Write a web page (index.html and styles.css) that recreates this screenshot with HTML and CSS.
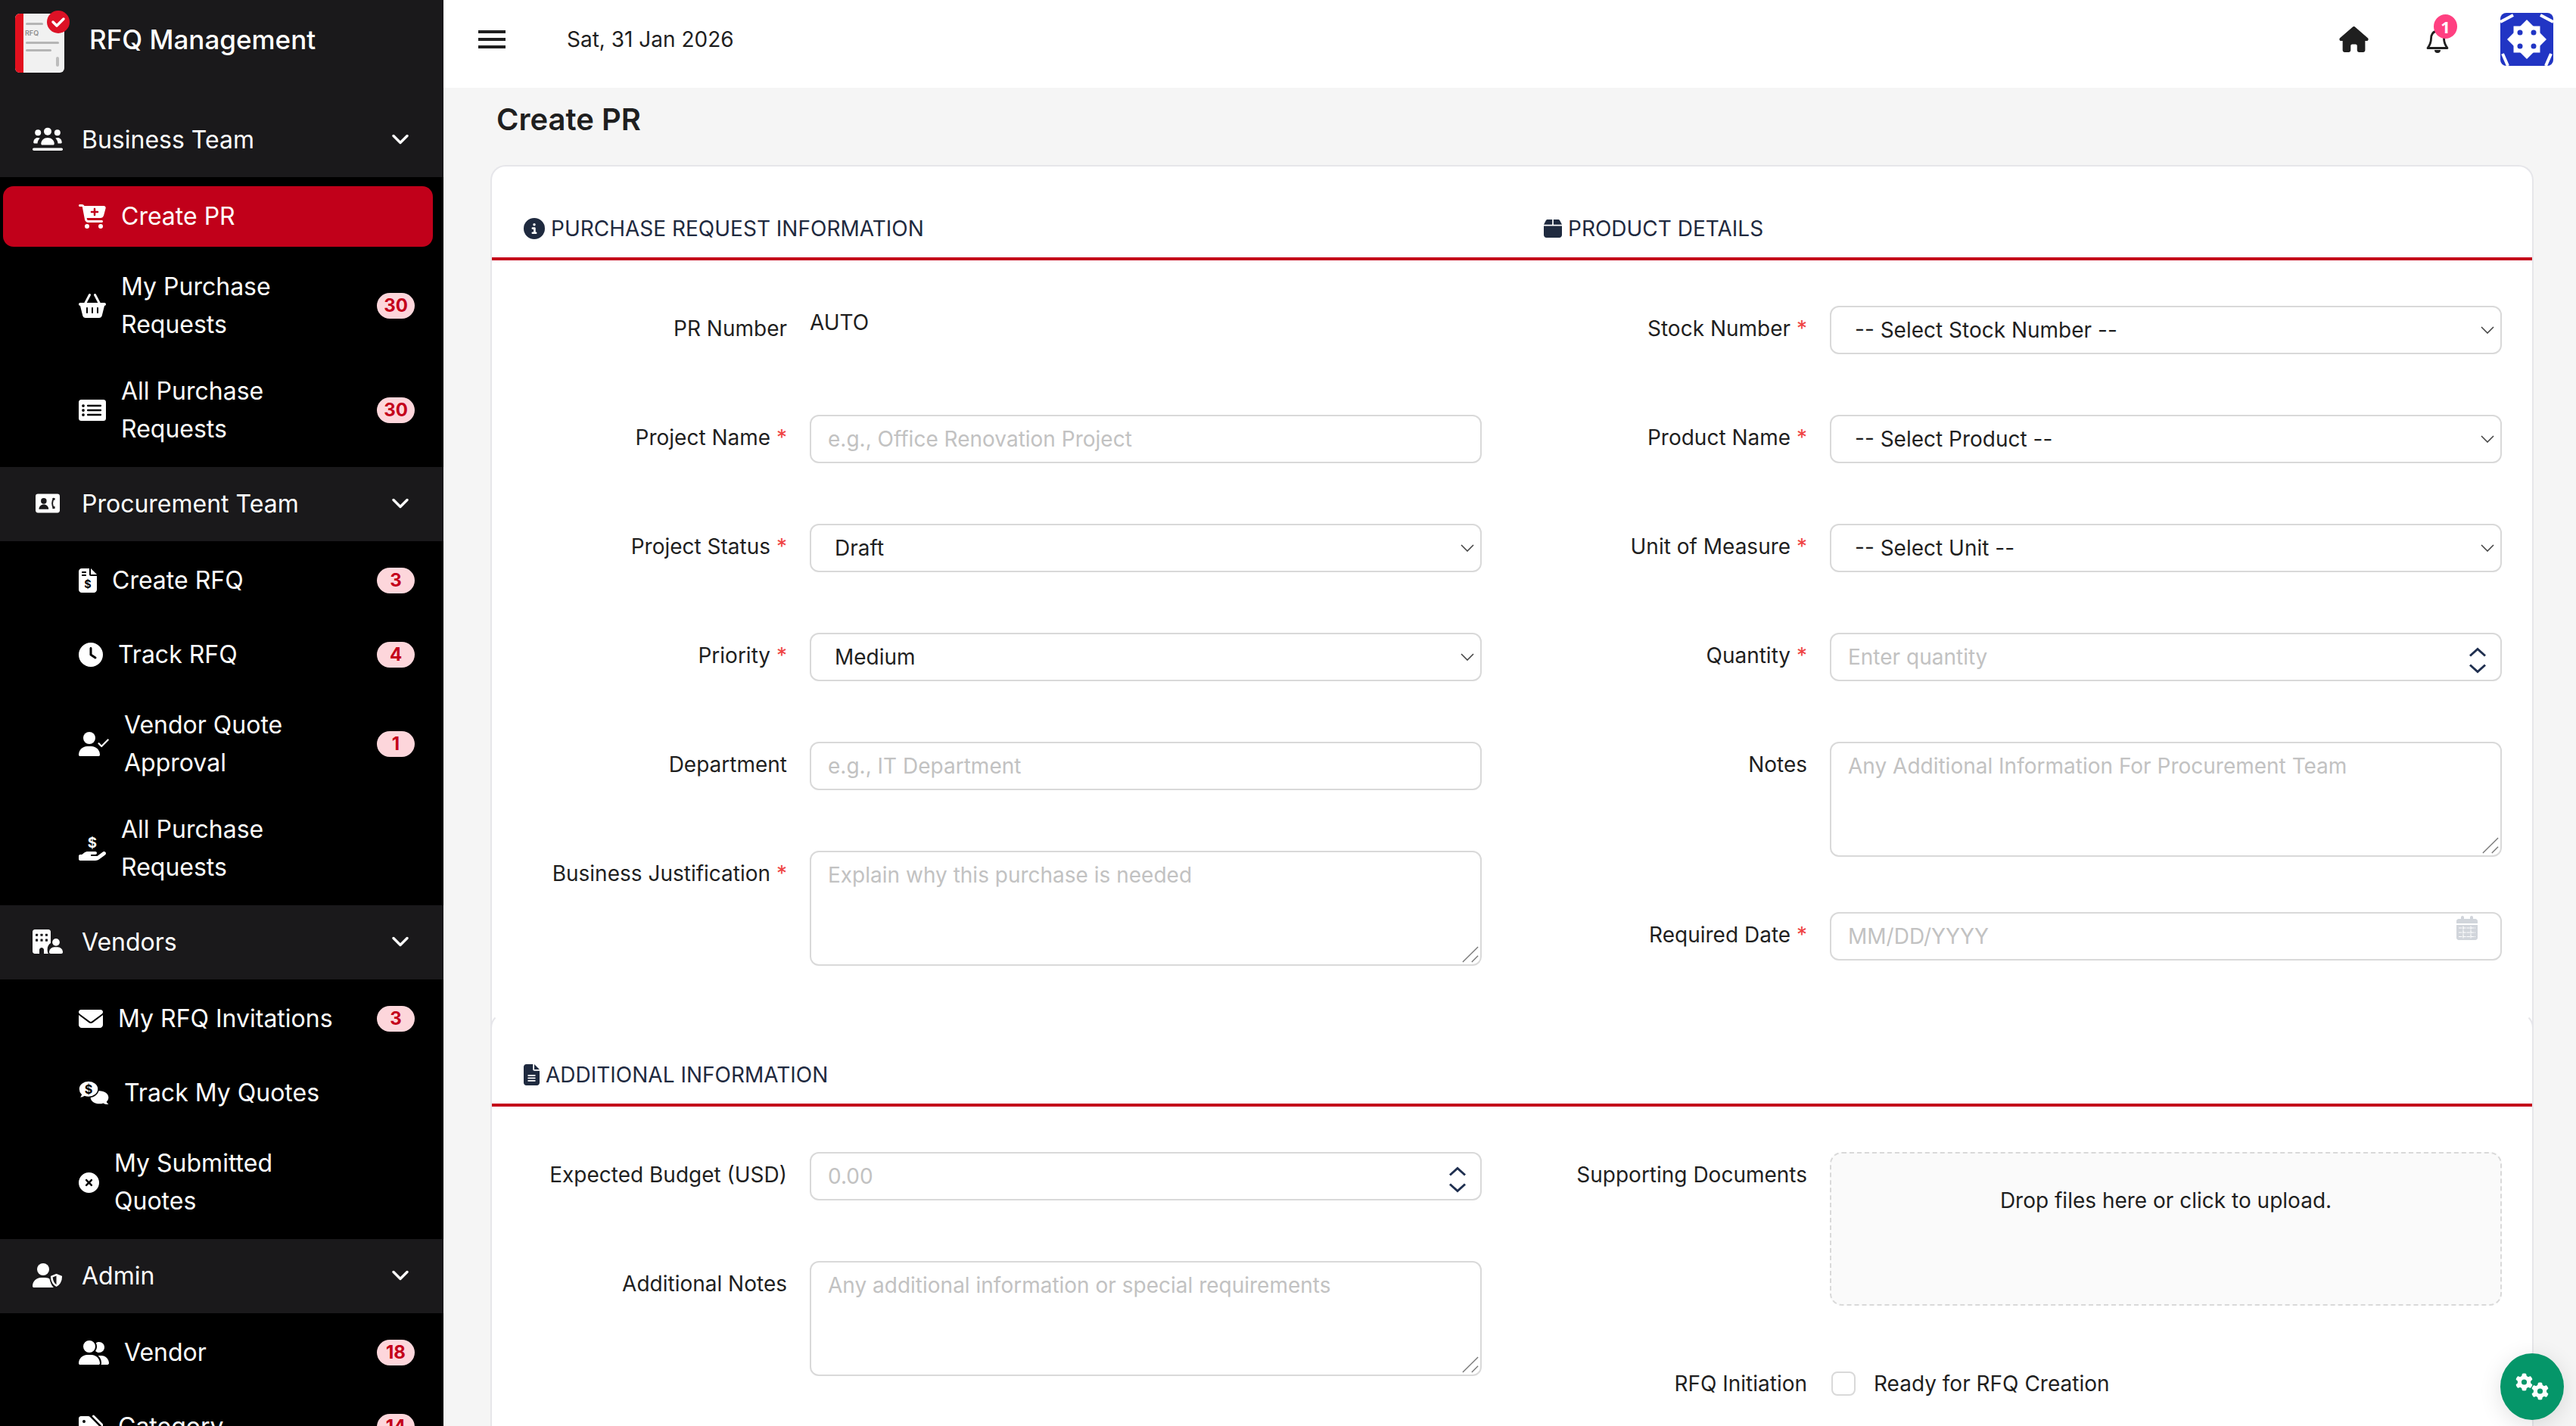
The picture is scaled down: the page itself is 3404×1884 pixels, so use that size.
FILE: index.html
```html
<!DOCTYPE html>
<html lang="en">
<head>
  <meta charset="UTF-8" />
  <title>Create PR - RFQ Management</title>
  <link rel="stylesheet" href="styles.css">
</head>
<body>
  <svg class="sprite" xmlns="http://www.w3.org/2000/svg">
    <symbol id="i-users-line" viewBox="0 0 640 512">
      <circle cx="320" cy="90" r="80"/><circle cx="115" cy="115" r="64"/><circle cx="525" cy="115" r="64"/>
      <path d="M180 350c0-70 62-125 140-125s140 55 140 125c0 14-10 24-24 24H204c-14 0-24-10-24-24z"/>
      <path d="M20 325c0-60 40-100 90-100 18 0 32 4 46 12-30 26-50 62-52 105H38c-10 0-18-7-18-17zM620 325c0-60-40-100-90-100-18 0-32 4-46 12 30 26 50 62 52 105h66c10 0 18-7 18-17z"/>
      <rect x="0" y="440" width="640" height="56" rx="28"/>
    </symbol>
    <symbol id="i-contact" viewBox="0 0 576 512">
      <rect y="32" width="576" height="448" rx="56"/>
      <circle cx="195" cy="200" r="68" fill="#1a191b"/>
      <path d="M80 396c0-66 50-112 115-112s115 46 115 112z" fill="#1a191b"/>
      <path d="M440 130c-56 70-56 180 0 250" fill="none" stroke="#1a191b" stroke-width="34"/>
      <path d="M400 130h60v50h-50zM400 380h60v-50h-50z" fill="#1a191b"/>
    </symbol>
    <symbol id="i-building-user" viewBox="0 0 640 512">
      <path d="M48 0h288c26.500 0 48 21.500 48 48v240c-40 20-70 70-70 130 0 36 6 70 20 94H240v-80c0-26-22-48-48-48s-48 22-48 48v80H48c-26.500 0-48-21.500-48-48V48C0 21.500 21.500 0 48 0z"/>
      <g fill="#1a191b"><rect x="64" y="90" width="50" height="50" rx="8"/><rect x="167" y="90" width="50" height="50" rx="8"/><rect x="270" y="90" width="50" height="50" rx="8"/><rect x="64" y="200" width="50" height="50" rx="8"/><rect x="167" y="200" width="50" height="50" rx="8"/><rect x="270" y="200" width="50" height="50" rx="8"/></g>
      <circle cx="496" cy="270" r="78"/>
      <path d="M352 480c0-60 50-110 110-110h68c60 0 110 50 110 110 0 18-14 32-32 32H384c-18 0-32-14-32-32z"/>
    </symbol>
    <symbol id="i-user-shield" viewBox="0 0 640 512">
      <circle cx="224" cy="128" r="128"/>
      <path d="M178 304h91c40 0 76 14 106 36 0 60 20 122 70 172H30C13 512 0 499 0 482c0-98 80-178 178-178z"/>
      <path d="M504 208l120 48c8 3 14 11 14 20 0 70-30 180-134 236-104-56-134-166-134-236 0-9 6-17 14-20z" stroke="#1a191b" stroke-width="26"/>
      <path d="M504 262v190c-50-36-74-100-78-158z" fill="#1a191b"/>
    </symbol>
    <symbol id="i-cart-plus" viewBox="0 0 576 512">
      <path d="M0 24C0 10.700 10.700 0 24 0H69.500c22 0 41.500 12.800 50.600 32h411c26.300 0 45.500 25 38.600 50.400l-41 152.300c-8.500 31.400-37 53.300-69.500 53.300H170.700l5.400 28.500c2.200 11.300 12.100 19.500 23.600 19.500H488c13.300 0 24 10.700 24 24s-10.700 24-24 24H199.700c-34.600 0-64.300-24.600-70.700-58.500L77.400 54.500c-.7-3.800-4-6.500-7.900-6.500H24C10.700 48 0 37.300 0 24zM128 464a48 48 0 1 1 96 0 48 48 0 1 1 -96 0zm336-48a48 48 0 1 1 0 96 48 48 0 1 1 0-96zM252 160c0 11 9 20 20 20h44v44c0 11 9 20 20 20s20-9 20-20V180h44c11 0 20-9 20-20s-9-20-20-20H356V96c0-11-9-20-20-20s-20 9-20 20v44H272c-11 0-20 9-20 20z" fill-rule="evenodd"/>
    </symbol>
    <symbol id="i-basket" viewBox="0 0 576 512">
      <path d="M253.300 35.100c6.100-11.800 1.500-26.300-10.200-32.400s-26.300-1.500-32.400 10.200L117.600 192H32c-17.700 0-32 14.300-32 32s14.300 32 32 32L83.900 463.500C91 492 116.600 512 146 512H430c29.400 0 55-20 62.100-48.500L544 256c17.700 0 32-14.300 32-32s-14.300-32-32-32H458.400L365.300 12.900C359.200 1.200 344.700-3.400 332.900 2.700s-16.300 20.600-10.200 32.400L404.300 192H171.700L253.300 35.100zM192 304v96c0 8.800-7.200 16-16 16s-16-7.200-16-16V304c0-8.800 7.200-16 16-16s16 7.200 16 16zm96-16c8.800 0 16 7.200 16 16v96c0 8.800-7.200 16-16 16s-16-7.200-16-16V304c0-8.800 7.200-16 16-16zm128 16v96c0 8.800-7.200 16-16 16s-16-7.200-16-16V304c0-8.800 7.200-16 16-16s16 7.200 16 16z"/>
    </symbol>
    <symbol id="i-list" viewBox="0 0 576 512">
      <rect y="32" width="576" height="448" rx="56"/>
      <g fill="#000"><circle cx="96" cy="160" r="30"/><circle cx="96" cy="256" r="30"/><circle cx="96" cy="352" r="30"/><rect x="176" y="140" width="304" height="40" rx="16"/><rect x="176" y="236" width="304" height="40" rx="16"/><rect x="176" y="332" width="304" height="40" rx="16"/></g>
    </symbol>
    <symbol id="i-invoice" viewBox="0 0 384 512">
      <path d="M64 0C28.700 0 0 28.700 0 64V448c0 35.300 28.700 64 64 64H320c35.300 0 64-28.700 64-64V160H256c-17.700 0-32-14.300-32-32V0H64zM256 0V128H384L256 0zM64 80c0-8.800 7.200-16 16-16h64c8.800 0 16 7.200 16 16s-7.200 16-16 16H80c-8.800 0-16-7.200-16-16zm0 64c0-8.800 7.200-16 16-16h64c8.800 0 16 7.200 16 16s-7.200 16-16 16H80c-8.800 0-16-7.200-16-16z"/>
      <text x="192" y="420" class="glyph-dollar" font-size="230" fill="#000">$</text>
    </symbol>
    <symbol id="i-clock" viewBox="0 0 512 512">
      <path d="M256 0a256 256 0 1 1 0 512A256 256 0 1 1 256 0zM232 120V256c0 8 4 15.500 10.700 20l96 64c11 7.400 25.900 4.400 33.300-6.700s4.400-25.900-6.700-33.300L280 243.200V120c0-13.300-10.700-24-24-24s-24 10.700-24 24z"/>
    </symbol>
    <symbol id="i-user-check" viewBox="0 0 640 512">
      <circle cx="224" cy="128" r="128"/>
      <path d="M178 304h91C368 304 448 384 448 482c0 17-13 30-30 30H30C13 512 0 499 0 482c0-98 80-178 178-178z"/>
      <path d="M425 245l58 58 135-135" fill="none" stroke="currentColor" stroke-width="36" stroke-linecap="round" stroke-linejoin="round"/>
    </symbol>
    <symbol id="i-hand-dollar" viewBox="0 0 576 512">
      <text x="288" y="240" class="glyph-dollar" font-size="300" fill="currentColor">$</text>
      <path d="M559.700 392.200c17.800-13.100 21.600-38.100 8.500-55.900s-38.100-21.600-55.900-8.500L392.600 416H272c-8.800 0-16-7.200-16-16s7.200-16 16-16h16 64c17.700 0 32-14.300 32-32s-14.300-32-32-32H288 272 193.700c-29.100 0-57.300 9.900-80 28L68.800 384H32c-17.700 0-32 14.300-32 32v64c0 17.700 14.300 32 32 32H192 352.500c29 0 57.300-9.300 80.700-26.500l126.600-93.300z"/>
    </symbol>
    <symbol id="i-envelope" viewBox="0 0 512 512">
      <path d="M48 64C21.500 64 0 85.500 0 112c0 15.100 7.100 29.300 19.200 38.400L236.800 313.600c11.400 8.500 27 8.500 38.400 0L492.800 150.400c12.100-9.100 19.200-23.300 19.200-38.400c0-26.500-21.500-48-48-48H48zM0 176V384c0 35.300 28.700 64 64 64H448c35.300 0 64-28.700 64-64V176L294.400 339.200c-22.800 17.100-54 17.100-76.800 0L0 176z"/>
    </symbol>
    <symbol id="i-comments-dollar" viewBox="0 0 640 512">
      <path d="M440 210c105 0 190 60 190 140 0 34-16 65-42 90 8 24 24 42 44 56-40 6-82-4-112-26-24 10-52 14-80 14-105 0-190-60-190-134s85-140 190-140z"/>
      <path d="M208 0c115 0 208 76 208 172s-93 172-208 172c-30 0-56-4-82-14-30 24-74 36-122 30 24-18 40-44 48-68C20 262 0 218 0 172 0 76 93 0 208 0z" stroke="#000" stroke-width="24"/>
      <text x="208" y="268" class="glyph-dollar" font-size="260" fill="#000">$</text>
    </symbol>
    <symbol id="i-xmark" viewBox="0 0 512 512">
      <path d="M256 512A256 256 0 1 0 256 0a256 256 0 1 0 0 512zM175 175c9.400-9.400 24.600-9.400 33.900 0l47 47 47-47c9.400-9.400 24.600-9.400 33.900 0s9.400 24.600 0 33.900l-47 47 47 47c9.400 9.400 9.400 24.600 0 33.900s-24.600 9.400-33.900 0l-47-47-47 47c-9.400 9.400-24.600 9.400-33.900 0s-9.400-24.600 0-33.900l47-47-47-47c-9.400-9.400-9.400-24.600 0-33.900z"/>
    </symbol>
    <symbol id="i-user-group" viewBox="0 0 640 512">
      <path d="M96 128a128 128 0 1 1 256 0A128 128 0 1 1 96 128zM0 482.300C0 383.800 79.800 304 178.300 304h91.400C368.200 304 448 383.800 448 482.300c0 16.400-13.300 29.700-29.700 29.700H29.700C13.300 512 0 498.700 0 482.300zM609.300 512H471.400c5.400-9.400 8.600-20.300 8.600-32v-8c0-60.700-27.100-115.200-69.800-151.800c2.400-.1 4.700-.2 7.100-.2h61.400C567.800 320 640 392.200 640 481.300c0 17-13.800 30.700-30.700 30.700zM432 256c-31 0-59-12.600-79.300-32.900C372.400 196.500 384 163.600 384 128c0-26.800-6.600-52.100-18.300-74.300C384.300 40.100 407.200 32 432 32c61.900 0 112 50.100 112 112s-50.100 112-112 112z"/>
    </symbol>
    <symbol id="i-tags" viewBox="0 0 512 512">
      <path d="M0 80V229.500c0 17 6.700 33.300 18.700 45.300l176 176c25 25 65.500 25 90.500 0L418.700 317.300c25-25 25-65.500 0-90.500l-176-176c-12-12-28.300-18.700-45.300-18.700H48C21.500 32 0 53.500 0 80zm112 32a32 32 0 1 1 0 64 32 32 0 1 1 0-64z"/>
      <path d="M312 32l171 171c37 37 37 97 0 134L335 485" fill="none" stroke="currentColor" stroke-width="48" stroke-linecap="round"/>
    </symbol>
    <symbol id="i-info" viewBox="0 0 512 512">
      <path d="M256 512A256 256 0 1 0 256 0a256 256 0 1 0 0 512zM216 336h24V272H216c-13.300 0-24-10.700-24-24s10.700-24 24-24h48c13.300 0 24 10.700 24 24v88h8c13.300 0 24 10.700 24 24s-10.700 24-24 24H216c-13.300 0-24-10.700-24-24s10.700-24 24-24zm40-208a32 32 0 1 1 0 64 32 32 0 1 1 0-64z"/>
    </symbol>
    <symbol id="i-box" viewBox="0 0 448 512">
      <path d="M50.700 58.500L0 160H208V32H93.700C75.500 32 58.900 42.300 50.700 58.500zM240 160H448L397.300 58.500C389.100 42.300 372.500 32 354.300 32H240V160zm208 32H0V416c0 35.300 28.700 64 64 64H384c35.300 0 64-28.700 64-64V192z"/>
    </symbol>
    <symbol id="i-file-lines" viewBox="0 0 384 512">
      <path d="M64 0C28.700 0 0 28.700 0 64V448c0 35.300 28.700 64 64 64H320c35.300 0 64-28.700 64-64V160H256c-17.700 0-32-14.300-32-32V0H64zM256 0V128H384L256 0zM112 256H272c8.800 0 16 7.200 16 16s-7.200 16-16 16H112c-8.800 0-16-7.200-16-16s7.200-16 16-16zm0 64H272c8.800 0 16 7.200 16 16s-7.200 16-16 16H112c-8.800 0-16-7.200-16-16s7.200-16 16-16zm0 64H272c8.800 0 16 7.200 16 16s-7.200 16-16 16H112c-8.800 0-16-7.200-16-16s7.200-16 16-16z"/>
    </symbol>
    <symbol id="i-chevron" viewBox="0 0 22 14">
      <path d="M2 2.500l9 9 9-9" fill="none" stroke="currentColor" stroke-width="3.400" stroke-linecap="round" stroke-linejoin="round"/>
    </symbol>
    <symbol id="i-gear" viewBox="0 0 512 512">
      <path d="M495.900 166.600c3.200 8.700 .5 18.400-6.400 24.600l-43.300 39.400c1.100 8.300 1.700 16.800 1.700 25.400s-.6 17.100-1.700 25.400l43.300 39.400c6.900 6.200 9.600 15.900 6.400 24.600c-4.400 11.900-9.700 23.300-15.800 34.300l-4.700 8.100c-6.600 11-14 21.400-22.100 31.200c-5.900 7.200-15.700 9.600-24.500 6.800l-55.700-17.700c-13.400 10.300-28.200 18.900-44 25.400l-12.500 57.100c-2 9.100-9 16.300-18.200 17.800c-13.800 2.300-28 3.500-42.500 3.500s-28.700-1.200-42.500-3.500c-9.200-1.500-16.200-8.700-18.200-17.800l-12.500-57.100c-15.800-6.500-30.600-15.100-44-25.400L83.100 425.900c-8.800 2.800-18.600 .3-24.500-6.800c-8.100-9.800-15.500-20.200-22.100-31.200l-4.700-8.100c-6.100-11-11.400-22.400-15.800-34.300c-3.200-8.700-.5-18.400 6.400-24.600l43.300-39.400C64.600 273.100 64 264.600 64 256s.6-17.100 1.700-25.400L22.400 191.200c-6.900-6.200-9.600-15.900-6.400-24.600c4.400-11.900 9.700-23.300 15.800-34.300l4.700-8.100c6.600-11 14-21.400 22.100-31.200c5.900-7.200 15.700-9.600 24.500-6.800l55.700 17.700c13.400-10.300 28.200-18.900 44-25.400l12.500-57.100c2-9.100 9-16.300 18.200-17.800C227.300 1.200 241.500 0 256 0s28.700 1.200 42.500 3.500c9.200 1.500 16.200 8.700 18.200 17.800l12.500 57.100c15.800 6.500 30.600 15.100 44 25.400l55.700-17.700c8.800-2.800 18.600-.3 24.500 6.800c8.100 9.800 15.500 20.200 22.100 31.200l4.700 8.100c6.100 11 11.400 22.400 15.800 34.300zM256 336a80 80 0 1 0 0-160 80 80 0 1 0 0 160z"/>
    </symbol>
    <symbol id="i-resize" viewBox="0 0 24 24">
      <path d="M1 23L23 1M14 23l9-9" fill="none" stroke="#777" stroke-width="1.500"/>
    </symbol>
    <symbol id="i-spin" viewBox="0 0 24 40">
      <path d="M2 14.500l10-9 10 9M2 26.500l10 9 10-9" fill="none" stroke="#1f2f4f" stroke-width="3"/>
    </symbol>
  </svg>

  <div class="app">
    <aside class="sidebar">
      <div class="brand">
        <svg class="brand-logo" viewBox="0 0 72 82" xmlns="http://www.w3.org/2000/svg">
          <rect x="0" y="4" width="65" height="78" rx="6" fill="#f1f1f1"/>
          <path d="M6 4h5v78H6a6 6 0 0 1-6-6V10a6 6 0 0 1 6-6z" fill="#e2101e"/>
          <rect x="14" y="16" width="23" height="3" rx="1.500" fill="#b5b5b5"/>
          <text x="13" y="33" class="brand-logo-text">RFQ</text>
          <rect x="14" y="41" width="44" height="3" rx="1.500" fill="#b5b5b5"/>
          <rect x="14" y="51" width="34" height="3" rx="1.500" fill="#b5b5b5"/>
          <rect x="54" y="61" width="4" height="13" rx="2" fill="#bdbdbd"/>
          <circle cx="57" cy="15" r="15" fill="#dc1226"/>
          <path d="M50 15l5 5 9-9" fill="none" stroke="#fff" stroke-width="3.500" stroke-linecap="round" stroke-linejoin="round"/>
        </svg>
        <span class="brand-name">RFQ Management</span>
      </div>

      <nav>
        <div class="group-head">
          <span class="group-icon"><svg class="w40"><use href="#i-users-line"/></svg></span>
          <span class="group-name">Business Team</span>
          <svg class="chevron"><use href="#i-chevron"/></svg>
        </div>
        <ul class="group-list">
          <li class="item active"><svg class="w36"><use href="#i-cart-plus"/></svg><span class="item-label">Create PR</span></li>
          <li class="item"><svg class="w36"><use href="#i-basket"/></svg><span class="item-label">My Purchase Requests</span><span class="badge">30</span></li>
          <li class="item"><svg class="w36"><use href="#i-list"/></svg><span class="item-label">All Purchase Requests</span><span class="badge">30</span></li>
        </ul>

        <div class="group-head">
          <span class="group-icon"><svg class="w32"><use href="#i-contact"/></svg></span>
          <span class="group-name">Procurement Team</span>
          <svg class="chevron"><use href="#i-chevron"/></svg>
        </div>
        <ul class="group-list">
          <li class="item"><svg class="w24"><use href="#i-invoice"/></svg><span class="item-label">Create RFQ</span><span class="badge">3</span></li>
          <li class="item"><svg class="w32"><use href="#i-clock"/></svg><span class="item-label">Track RFQ</span><span class="badge">4</span></li>
          <li class="item"><svg class="w40"><use href="#i-user-check"/></svg><span class="item-label">Vendor Quote Approval</span><span class="badge">1</span></li>
          <li class="item"><svg class="w36"><use href="#i-hand-dollar"/></svg><span class="item-label">All Purchase Requests</span></li>
        </ul>

        <div class="group-head">
          <span class="group-icon"><svg class="w40"><use href="#i-building-user"/></svg></span>
          <span class="group-name">Vendors</span>
          <svg class="chevron"><use href="#i-chevron"/></svg>
        </div>
        <ul class="group-list">
          <li class="item"><svg class="w32"><use href="#i-envelope"/></svg><span class="item-label">My RFQ Invitations</span><span class="badge">3</span></li>
          <li class="item"><svg class="w40"><use href="#i-comments-dollar"/></svg><span class="item-label">Track My Quotes</span></li>
          <li class="item"><svg class="w27"><use href="#i-xmark"/></svg><span class="item-label">My Submitted Quotes</span></li>
        </ul>

        <div class="group-head">
          <span class="group-icon"><svg class="w40"><use href="#i-user-shield"/></svg></span>
          <span class="group-name">Admin</span>
          <svg class="chevron"><use href="#i-chevron"/></svg>
        </div>
        <ul class="group-list">
          <li class="item"><svg class="w40"><use href="#i-user-group"/></svg><span class="item-label">Vendor</span><span class="badge">18</span></li>
          <li class="item"><svg class="w32"><use href="#i-tags"/></svg><span class="item-label">Category</span><span class="badge">14</span></li>
        </ul>
      </nav>
    </aside>

    <div class="main">
      <header class="topbar">
        <div class="burger"><span></span><span></span><span></span></div>
        <span class="date">Sat, 31 Jan 2026</span>
        <div class="topbar-right">
          <svg class="home" viewBox="0 0 576 512" xmlns="http://www.w3.org/2000/svg"><path d="M575.800 255.500c0 18-15 32.100-32 32.100h-32l.7 160.200c0 2.700-.2 5.400-.5 8.100V472c0 22.100-17.900 40-40 40H456c-1.100 0-2.200 0-3.300-.1c-1.400 .1-2.800 .1-4.200 .1H416 392c-22.100 0-40-17.900-40-40V448 384c0-17.700-14.300-32-32-32H256c-17.700 0-32 14.300-32 32v64 24c0 22.100-17.900 40-40 40H160 128.100c-1.500 0-3-.1-4.500-.2c-1.200 .1-2.400 .2-3.600 .2H104c-22.100 0-40-17.900-40-40V360c0-.9 0-1.900 .1-2.800V287.600H32c-18 0-32-14-32-32.100c0-9 3-17 10-24L266.400 8c7-7 15-8 22-8s15 2 21 7L564.800 231.500c8 7 12 15 11 24z"/></svg>
          <div class="bell">
            <svg viewBox="0 0 30 32" xmlns="http://www.w3.org/2000/svg"><path d="M15 3C9 3 6.500 8 6.500 13c0 6-2 9-4.500 12.500h26C25.500 22 23.500 19 23.500 13 23.500 8 21 3 15 3z" fill="none" stroke="#1f1f1f" stroke-width="2.800" stroke-linejoin="round"/><path d="M11 28h8a4 4 0 0 1-8 0z" fill="#1f1f1f"/></svg>
            <span class="bell-count">1</span>
          </div>
          <svg class="avatar" viewBox="0 0 70 70" xmlns="http://www.w3.org/2000/svg">
            <rect width="70" height="70" rx="8" fill="#2135c4"/>
            <g fill="#fff"><rect x="17.500" y="17.500" width="35" height="35"/><path d="M35 9l26 26-26 26L9 35z"/></g>
            <g fill="#2135c4"><circle cx="26" cy="26" r="3.500"/><circle cx="44" cy="26" r="3.500"/><circle cx="26" cy="44" r="3.500"/><circle cx="44" cy="44" r="3.500"/></g>
            <path d="M0 12L17 3M70 12L53 3M3 54l7 16M67 54l-7 16" stroke="#fff" stroke-width="4" fill="none"/>
          </svg>
        </div>
      </header>

      <div class="content">
        <h1 class="page-title">Create PR</h1>
        <div class="card">
          <section class="form-section">
            <div class="section-head">
              <h2 class="section-title"><svg class="w28"><use href="#i-info"/></svg>PURCHASE REQUEST INFORMATION</h2>
              <h2 class="section-title"><svg class="w24"><use href="#i-box"/></svg>PRODUCT DETAILS</h2>
            </div>
            <div class="section-body">
              <div class="form-col">
                <div class="field">
                  <label>PR Number</label>
                  <div class="static-value">AUTO</div>
                </div>
                <div class="field">
                  <label>Project Name <em>*</em></label>
                  <input type="text" placeholder="e.g., Office Renovation Project">
                </div>
                <div class="field">
                  <label>Project Status <em>*</em></label>
                  <select><option>Draft</option></select>
                </div>
                <div class="field">
                  <label>Priority <em>*</em></label>
                  <select><option>Medium</option></select>
                </div>
                <div class="field">
                  <label>Department</label>
                  <input type="text" placeholder="e.g., IT Department">
                </div>
                <div class="field">
                  <label>Business Justification <em>*</em></label>
                  <div class="control">
                    <textarea placeholder="Explain why this purchase is needed"></textarea>
                    <svg class="resize-mark"><use href="#i-resize"/></svg>
                  </div>
                </div>
              </div>
              <div class="form-col">
                <div class="field">
                  <label>Stock Number <em>*</em></label>
                  <select><option>-- Select Stock Number --</option></select>
                </div>
                <div class="field">
                  <label>Product Name <em>*</em></label>
                  <select><option>-- Select Product --</option></select>
                </div>
                <div class="field">
                  <label>Unit of Measure <em>*</em></label>
                  <select><option>-- Select Unit --</option></select>
                </div>
                <div class="field">
                  <label>Quantity <em>*</em></label>
                  <div class="control">
                    <input type="text" placeholder="Enter quantity">
                    <svg class="spin-mark"><use href="#i-spin"/></svg>
                  </div>
                </div>
                <div class="field field-tight">
                  <label>Notes</label>
                  <div class="control">
                    <textarea placeholder="Any Additional Information For Procurement Team"></textarea>
                    <svg class="resize-mark"><use href="#i-resize"/></svg>
                  </div>
                </div>
                <div class="field">
                  <label>Required Date <em>*</em></label>
                  <div class="control">
                    <input type="text" placeholder="MM/DD/YYYY">
                    <svg class="date-mark" viewBox="0 0 448 512" xmlns="http://www.w3.org/2000/svg">
                      <path d="M128 0c17.700 0 32 14.300 32 32V64H288V32c0-17.700 14.300-32 32-32s32 14.300 32 32V64h48c26.500 0 48 21.500 48 48v48H0V112C0 85.500 21.500 64 48 64H96V32c0-17.700 14.300-32 32-32zM0 192H448V464c0 26.500-21.500 48-48 48H48c-26.500 0-48-21.500-48-48V192z" fill="#d1d5db"/>
                      <path d="M48 256H400M48 352H400M48 440H400M144 220V480M304 220V480" stroke="#fff" stroke-width="18" stroke-dasharray="70 14"/>
                    </svg>
                  </div>
                </div>
              </div>
            </div>
          </section>

          <section class="form-section form-section-next">
            <div class="section-head">
              <h2 class="section-title"><svg class="w21"><use href="#i-file-lines"/></svg>ADDITIONAL INFORMATION</h2>
            </div>
            <div class="section-body">
              <div class="form-col">
                <div class="field">
                  <label>Expected Budget (USD)</label>
                  <div class="control">
                    <input type="text" placeholder="0.00">
                    <svg class="spin-mark"><use href="#i-spin"/></svg>
                  </div>
                </div>
                <div class="field">
                  <label>Additional Notes</label>
                  <div class="control">
                    <textarea placeholder="Any additional information or special requirements"></textarea>
                    <svg class="resize-mark"><use href="#i-resize"/></svg>
                  </div>
                </div>
              </div>
              <div class="form-col">
                <div class="field field-tight">
                  <label>Supporting Documents</label>
                  <div class="dropzone">Drop files here or click to upload.</div>
                </div>
                <div class="field">
                  <label>RFQ Initiation</label>
                  <div class="check-row"><span class="checkbox"></span>Ready for RFQ Creation</div>
                </div>
              </div>
            </div>
          </section>
        </div>
      </div>
    </div>
  </div>

  <button class="fab" type="button" aria-label="Settings">
    <svg viewBox="0 0 44 36" xmlns="http://www.w3.org/2000/svg">
      <use href="#i-gear" x="0" y="0" width="23" height="24"/>
      <use href="#i-gear" x="21" y="12" width="23" height="24"/>
    </svg>
  </button>
</body>
</html>
```

FILE: styles.css
```css
* {
  box-sizing: border-box;
}

html,
body {
  height: 100%;
}

body {
  margin: 0;
  overflow: hidden;
  background-color: #f5f5f5;
  color: #1f1f1f;
  font-family: "Inter", "Liberation Sans", sans-serif;
  font-size: 28px;
}

.sprite {
  display: none;
}

svg {
  fill: currentColor;
  flex-shrink: 0;
}

.w21 { width: 21px; height: 28px; }
.w24 { width: 24px; height: 32px; }
.w27 { width: 27px; height: 27px; }
.w28 { width: 28px; height: 28px; }
.w32 { width: 32px; height: 32px; }
.w36 { width: 36px; height: 32px; }
.w40 { width: 40px; height: 32px; }

.app {
  display: flex;
  height: 100%;
}

/* sidebar */
.sidebar {
  width: 586px;
  flex-shrink: 0;
  height: 100%;
  overflow: hidden;
  background-color: #000;
  color: #fff;
}

.brand {
  display: flex;
  align-items: flex-start;
  gap: 26px;
  height: 136px;
  padding: 14px 0 0 20px;
  background-color: #1a191b;
}

.brand-logo {
  width: 72px;
  height: 82px;
}

.brand-logo-text {
  font-size: 9px;
  font-weight: 600;
  fill: #8d8d8d;
}

.brand-name {
  font-size: 35px;
  font-weight: 500;
  line-height: 76px;
}

.group-head {
  display: flex;
  align-items: center;
  height: 98px;
  padding: 0 46px 2px 43px;
  background-color: #1a191b;
}

.group-icon {
  display: flex;
  justify-content: center;
  width: 40px;
  margin-right: 25px;
}

.group-name {
  flex: 1;
  font-size: 32px;
  font-weight: 400;
}

.chevron {
  width: 22px;
  height: 14px;
}

.group-list {
  display: flex;
  flex-direction: column;
  gap: 18px;
  margin: 0;
  padding: 12px 0 15px;
  list-style: none;
}

.item {
  display: flex;
  align-items: center;
  gap: 20px;
  min-height: 80px;
  margin: 0 14px 0 4px;
  padding: 10px 24px 10px 100px;
  border-radius: 14px;
  font-size: 32px;
  line-height: 50px;
}

.item.active {
  background-color: #c1001a;
}

.item-label {
  flex: 1;
  max-width: 300px;
}

.badge {
  min-width: 50px;
  height: 34px;
  margin-left: auto;
  padding: 0 8px;
  border-radius: 17px;
  background-color: #fdd6db;
  color: #c4001a;
  font-size: 24px;
  font-weight: 700;
  line-height: 34px;
  text-align: center;
}

/* top bar */
.main {
  flex: 1;
  min-width: 0;
}

.topbar {
  display: flex;
  align-items: center;
  height: 116px;
  padding: 0 30px 12px 46px;
  background-color: #fff;
}

.burger {
  display: flex;
  flex-direction: column;
  gap: 5.5px;
  width: 36px;
  margin-right: 81px;
}

.burger span {
  height: 4.500px;
  background-color: #1f1f1f;
}

.date {
  font-size: 28px;
}

.topbar-right {
  display: flex;
  align-items: center;
  margin-left: auto;
}

.home {
  width: 39px;
  height: 34px;
  color: #1f1f1f;
}

.bell {
  position: relative;
  width: 30px;
  height: 32px;
  margin: 4px 68px 0 76px;
}

.bell svg {
  display: block;
}

.bell-count {
  position: absolute;
  top: -19px;
  left: 10px;
  width: 31px;
  height: 32px;
  border-radius: 50%;
  background-color: #ff4081;
  color: #fff;
  font-family: "Open Sans", sans-serif;
  font-size: 22px;
  font-weight: 700;
  line-height: 32px;
  text-align: center;
}

.avatar {
  width: 70px;
  height: 70px;
}

/* form */
.content {
  padding: 20px 56px 0 62px;
}

.page-title {
  margin: 0 0 38px 8px;
  font-size: 40px;
  font-weight: 600;
  line-height: 44px;
}

.card {
  border: 2px solid #e6e6ea;
  border-bottom: 0;
  border-radius: 20px 20px 0 0;
  background-color: #fff;
}

.form-section-next {
  margin: 0 -2px;
  border-top: 2px solid #fff;
  border-left: 2px solid #e6e6ea;
  border-right: 2px solid #e6e6ea;
  border-radius: 20px 20px 0 0;
  background-color: #fff;
}

.section-head {
  display: grid;
  grid-template-columns: 1fr 1fr;
  padding-top: 62px;
  padding-bottom: 18px;
  border-bottom: 4px solid #c4001a;
}

.form-section-next .section-head {
  padding-top: 60px;
}

.section-title {
  display: flex;
  align-items: center;
  gap: 8px;
  margin: 0;
  padding-left: 42px;
  color: #1f2a3f;
  font-size: 28px;
  font-weight: 400;
  line-height: 40px;
}

.section-body {
  display: grid;
  grid-template-columns: 1fr 1fr;
  padding-top: 60px;
  padding-bottom: 62px;
}

.form-col {
  display: flex;
  flex-direction: column;
  gap: 80px;
  padding: 0 40px 0 42px;
}

.field {
  display: grid;
  grid-template-columns: 348px 1fr;
  gap: 30px;
  align-items: start;
}

.field-tight {
  margin-bottom: -7px;
}

.field label {
  padding-top: 10px;
  font-size: 28px;
  line-height: 40px;
  text-align: right;
}

.field em {
  color: #ef4444;
  font-style: normal;
}

.static-value {
  height: 64px;
  line-height: 44px;
}

.control {
  position: relative;
}

input,
select,
textarea {
  display: block;
  width: 100%;
  height: 64px;
  border: 2px solid #d9d9d9;
  border-radius: 12px;
  outline: 0;
  background-color: #fff;
  color: #1f1f1f;
  font-family: inherit;
  font-size: 28px;
}

input {
  padding: 0 22px;
}

select {
  padding: 0 31px;
  appearance: none;
  background-image: url("data:image/svg+xml,%3Csvg xmlns='http://www.w3.org/2000/svg' width='18' height='10'%3E%3Cpath d='M1 1l8 8 8-8' fill='none' stroke='%23444' stroke-width='1.600'/%3E%3C/svg%3E");
  background-position: right 8px center;
  background-repeat: no-repeat;
}

textarea {
  height: 152px;
  padding: 10px 22px;
  line-height: 40px;
  resize: none;
}

::placeholder {
  color: #c2c2c2;
  opacity: 1;
}

.resize-mark {
  position: absolute;
  right: 4px;
  bottom: 4px;
  width: 22px;
  height: 22px;
}

.spin-mark {
  position: absolute;
  top: 16px;
  right: 20px;
  width: 24px;
  height: 40px;
}

.date-mark {
  position: absolute;
  top: 5px;
  right: 32px;
  width: 28px;
  height: 32px;
}

.dropzone {
  height: 203px;
  padding-top: 42px;
  border: 2px dashed #d9d9d9;
  border-radius: 16px;
  background-color: #fafafa;
  line-height: 40px;
  text-align: center;
}

.check-row {
  display: flex;
  align-items: center;
  gap: 24px;
  height: 60px;
  padding-left: 2px;
}

.checkbox {
  width: 32px;
  height: 32px;
  border: 2px solid #d9d9d9;
  border-radius: 8px;
  background-color: #fff;
}

.fab {
  position: fixed;
  right: 16px;
  bottom: 8px;
  display: flex;
  align-items: center;
  justify-content: center;
  width: 84px;
  height: 88px;
  padding: 0;
  border: 0;
  border-radius: 50%;
  background-color: #059669;
  box-shadow: 0 6px 30px rgba(0, 0, 0, 0.12);
  color: #fff;
}

.fab svg {
  width: 44px;
  height: 36px;
}

.glyph-dollar {
  font-family: "Inter", sans-serif;
  font-weight: 700;
  text-anchor: middle;
}
```
